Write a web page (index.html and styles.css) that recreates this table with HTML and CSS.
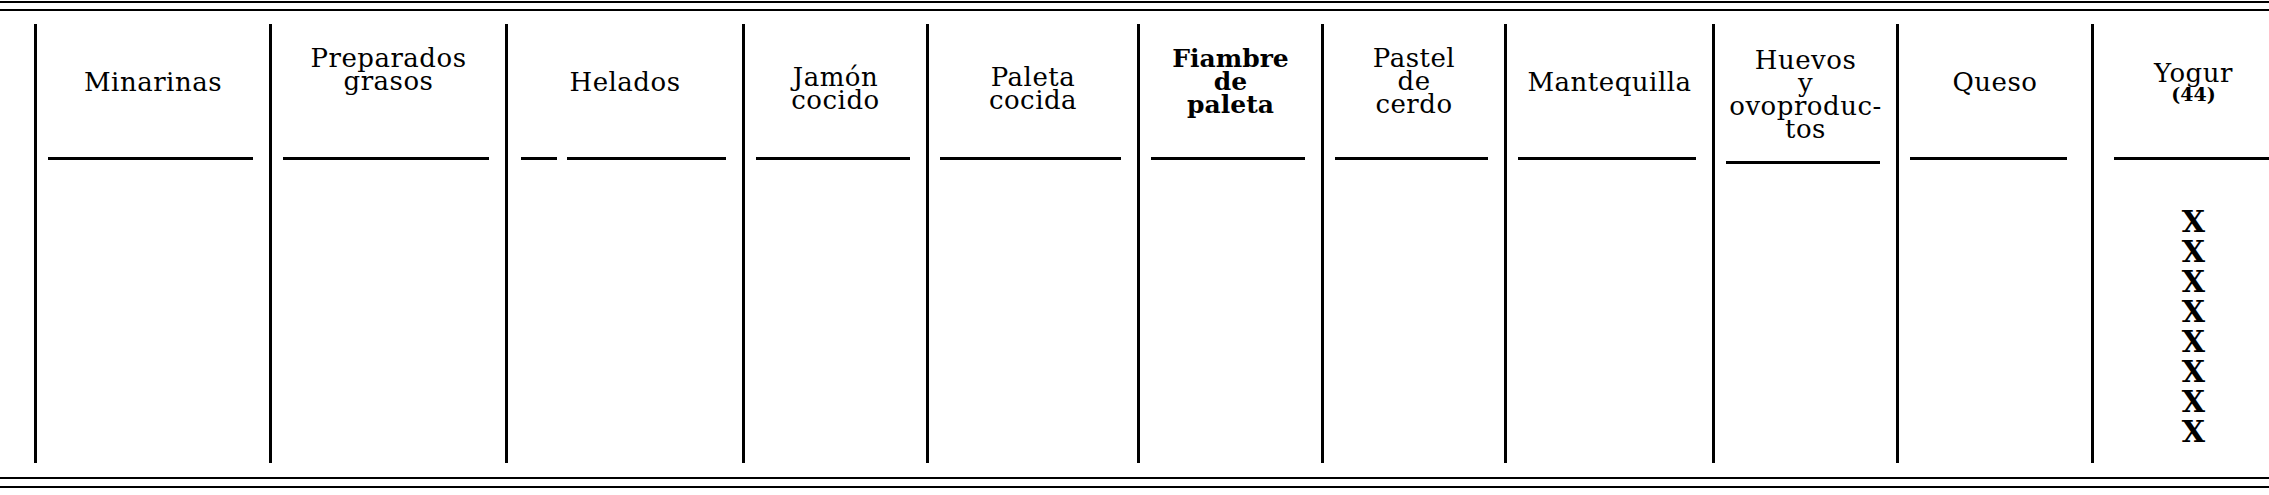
FILE: index.html
```html
<!DOCTYPE html>
<html lang="es">
<head>
<meta charset="utf-8">
<title>Tabla de productos</title>
<link rel="stylesheet" href="styles.css">
</head>
<body>
<div class="sheet">
  <div class="double-rule"></div>
  <div class="cols">
    <div class="col">
      <div class="head one">Minarinas</div>
      <div class="sub"></div>
    </div>
    <div class="col">
      <div class="head top">Preparados<br>grasos</div>
      <div class="sub"></div>
    </div>
    <div class="col">
      <div class="head one">Helados</div>
      <div class="sub sub-gap"></div>
    </div>
    <div class="col">
      <div class="head mid">Jamón<br>cocido</div>
      <div class="sub"></div>
    </div>
    <div class="col">
      <div class="head mid">Paleta<br>cocida</div>
      <div class="sub"></div>
    </div>
    <div class="col">
      <div class="head top bold">Fiambre<br>de<br>paleta</div>
      <div class="sub"></div>
    </div>
    <div class="col">
      <div class="head top">Pastel<br>de<br>cerdo</div>
      <div class="sub"></div>
    </div>
    <div class="col">
      <div class="head one">Mantequilla</div>
      <div class="sub"></div>
    </div>
    <div class="col">
      <div class="head top low">Huevos<br>y<br>ovoproduc-<br>tos</div>
      <div class="sub sub-low"></div>
    </div>
    <div class="col">
      <div class="head one">Queso</div>
      <div class="sub sub-wide-right"></div>
    </div>
    <div class="col">
      <div class="head yog">Yogur<span class="note">(44)</span></div>
      <div class="sub sub-last"></div>
      <div class="marks">
        <span>X</span><span>X</span><span>X</span><span>X</span>
        <span>X</span><span>X</span><span>X</span><span>X</span>
      </div>
    </div>
  </div>
  <div class="double-rule bottom"></div>
</div>
</body>
</html>
```

FILE: styles.css
```css
html, body {
  margin: 0;
  padding: 0;
  background: #fff;
}

body {
  overflow: hidden;
  color: #000;
  font-family: "DejaVu Serif", "Liberation Serif", serif;
}

.sheet {
  width: 2293px;
}

.double-rule {
  margin-top: 1px;
  height: 6px;
  border-top: 2px solid #000;
  border-bottom: 2px solid #000;
}

.double-rule.bottom {
  margin-top: 14px;
  height: 7px;
}

.cols {
  display: grid;
  grid-template-columns: 235px 236px 237px 184px 211px 184px 183px 208px 184px 195px 202px;
  margin-top: 13px;
  padding-left: 34px;
}

.col {
  box-sizing: border-box;
  height: 439px;
  border-left: 3px solid #000;
}

.head {
  box-sizing: border-box;
  height: 133px;
  text-align: center;
  font-size: 26px;
  line-height: 23px;
  letter-spacing: 0.5px;
}

.head.one {
  padding-top: 47px;
}

.head.top {
  padding-top: 22.5px;
}

.head.top.low {
  padding-top: 25px;
}

.head.mid {
  padding-top: 41.5px;
}

.head.yog {
  padding-top: 37.5px;
}

.head.bold {
  font-size: 25px;
  font-weight: bold;
  letter-spacing: 0;
}

.note {
  display: block;
  margin-top: 1px;
  font-size: 19px;
  line-height: 17px;
  font-weight: bold;
  letter-spacing: 0;
}

.sub {
  height: 3px;
  margin: 0 16px 0 11px;
  background: #000;
}

.sub-gap {
  margin-left: 13px;
  background: linear-gradient(to right, #000 0 36px, transparent 36px 46px, #000 46px);
}

.sub-low {
  margin-top: 4px;
}

.sub-wide-right {
  margin-right: 24px;
}

.sub-last {
  margin: 0 0 0 20px;
}

.marks {
  padding-top: 46.5px;
  text-align: center;
  font-size: 30px;
  line-height: 30px;
  font-weight: bold;
}

.marks span {
  display: block;
}
```
